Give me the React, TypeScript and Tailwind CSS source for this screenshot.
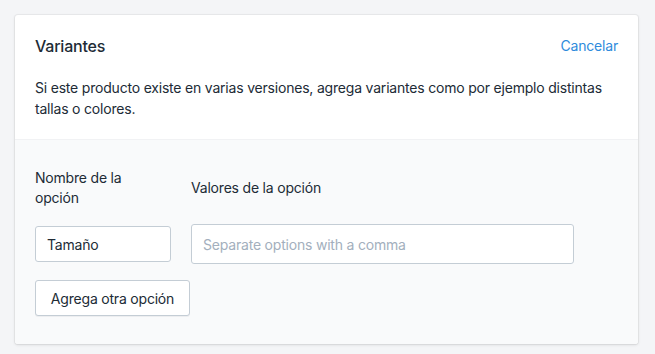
export default function App() {
  return (
    <div
      className="min-h-screen bg-[#f4f5f7] pt-[15px] pl-[15px] pr-[17px] tracking-[-0.2px] text-[#212b36]"
      style={{ fontFamily: 'Inter, "Noto Sans", sans-serif' }}
    >
      <div className="w-[623px] overflow-hidden rounded-[3px] bg-white shadow-[0_0_0_1px_rgba(63,63,68,0.05),0_1px_3px_0_rgba(63,63,68,0.15)]">
        {/* Header */}
        <div className="px-5 pt-5 pb-5">
          <div className="flex items-center justify-between">
            <h2 className="text-[16px] leading-[22px] font-medium">Variantes</h2>
            <button className="text-[14px] leading-[22px] text-[#2e8bdc]">Cancelar</button>
          </div>
          <p className="mt-5 text-[14px] leading-[21px]">
            Si este producto existe en varias versiones, agrega variantes como por ejemplo distintas
            tallas o colores.
          </p>
        </div>

        {/* Options */}
        <div className="border-t border-[#f1f2f4] bg-[#f9fafb] px-5 pt-7 pb-7">
          <div className="grid grid-cols-[136px_383px] items-center gap-x-5">
            <label className="text-[14px] leading-[20px]">
              Nombre de la
              <br />
              opción
            </label>
            <label className="text-[14px] leading-[20px]">Valores de la opción</label>
          </div>
          <div className="mt-4 grid grid-cols-[136px_383px] items-center gap-x-5">
            <input
              defaultValue="Tamaño"
              className="h-9 w-full rounded-[3px] border border-[#c4cdd5] bg-white px-[11px] text-[14px] text-[#212b36] outline-none"
            />
            <input
              placeholder="Separate options with a comma"
              className="h-10 w-full rounded-[3px] border border-[#c4cdd5] bg-white px-[11px] text-[14px] text-[#212b36] outline-none placeholder:text-[#a3afbd]"
            />
          </div>
          <button className="mt-4 h-9 w-[155px] rounded-[3px] border border-[#c4cdd5] bg-white text-[14px] text-[#212b36] shadow-[0_1px_0_rgba(22,29,37,0.05)]">
            Agrega otra opción
          </button>
        </div>
      </div>
    </div>
  )
}
